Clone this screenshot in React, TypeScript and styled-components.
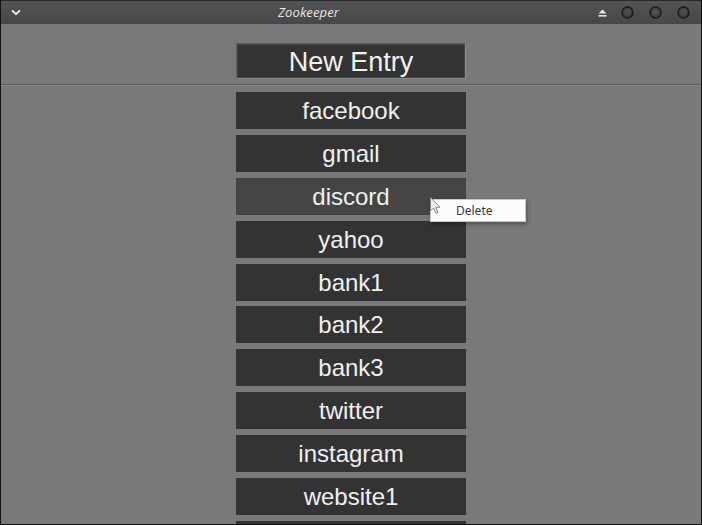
import React from "react";
import styled, { createGlobalStyle } from "styled-components";

const Global = createGlobalStyle`
  html, body { margin: 0; padding: 0; background: #000; }
  body { font-family: "Liberation Sans", Arial, sans-serif; }
`;

const Window = styled.div`
  position: relative;
  width: 702px;
  height: 525px;
  box-sizing: border-box;
  border: 1px solid #111;
  border-top-color: #2a2a2a;
  border-radius: 3px 3px 0 0;
  background: #797979;
  display: flex;
  flex-direction: column;
  overflow: hidden;
`;

const TitleBar = styled.div`
  height: 23px;
  flex: none;
  display: flex;
  align-items: center;
  background: linear-gradient(#525355, #46474a);
`;

const LeftZone = styled.div`
  width: 24px;
  display: flex;
  justify-content: center;
  padding-left: 6px;
  box-sizing: border-box;
`;

const Title = styled.div`
  flex: 1;
  text-align: center;
  font-family: "Open Sans", "Noto Sans", sans-serif;
  font-style: italic;
  font-size: 13px;
  color: #e8e8e8;
  letter-spacing: 0.1px;
  margin-top: -1px;
`;

const RightZone = styled.div`
  display: flex;
  align-items: center;
  gap: 16px;
  padding-right: 12px;
  padding-left: 6px;
`;

const Knob = styled.div`
  width: 13px;
  height: 13px;
  border-radius: 50%;
  box-sizing: border-box;
  border: 2px solid #232325;
  background: radial-gradient(circle at 50% 40%, #55565a, #3e3f42 75%);
  box-shadow: 0 0 0 0.5px #5c5d60;
  margin: 0 -0.5px;
`;

const Body = styled.div`
  flex: 1;
  display: flex;
  flex-direction: column;
`;

const Header = styled.div`
  height: 60px;
  flex: none;
  display: flex;
  justify-content: center;
  padding-top: 19px;
  box-sizing: border-box;
`;

const NewEntryFrame = styled.div`
  width: 230px;
  height: 36px;
  box-sizing: border-box;
  border: 1px solid;
  border-color: #5c5c5c #8a8a8a #8a8a8a #5c5c5c;
  background: #333333;
  box-shadow: inset 0 0 0 1px #444;
  display: flex;
  align-items: center;
  justify-content: center;
  color: #f2f2f2;
  font-size: 27px;
  line-height: 1;
  padding-top: 2px;
`;

const Separator = styled.div`
  height: 1px;
  flex: none;
  background: #5f5f5f;
  border-bottom: 1px solid #858585;
`;

const List = styled.div`
  display: flex;
  flex-direction: column;
  align-items: center;
  gap: 5.9px;
  padding-top: 6px;
`;

const Item = styled.div<{ $hover?: boolean }>`
  width: 230px;
  height: 37px;
  flex: none;
  background: ${(p) => (p.$hover ? "#454545" : "#333333")};
  color: #f0f0f0;
  font-size: 24px;
  display: flex;
  align-items: center;
  justify-content: center;
  line-height: 1;
  padding-top: 1px;
  box-sizing: border-box;
`;

const Menu = styled.div`
  position: absolute;
  left: 429px;
  top: 198px;
  width: 96px;
  height: 23px;
  box-sizing: border-box;
  background: #fcfcfc;
  border: 1px solid #c9c9c9;
  box-shadow: 1px 2px 4px rgba(0, 0, 0, 0.35);
  font-family: "Noto Sans", "Open Sans", sans-serif;
  font-size: 12px;
  color: #3a3a3a;
  padding-left: 25px;
  display: flex;
  align-items: center;
`;

const Cursor = styled.svg`
  position: absolute;
  left: 428px;
  top: 195px;
`;

const items = [
  "facebook",
  "gmail",
  "discord",
  "yahoo",
  "bank1",
  "bank2",
  "bank3",
  "twitter",
  "instagram",
  "website1",
  "website2",
];

export default function App() {
  return (
    <>
      <Global />
      <Window>
        <TitleBar>
          <LeftZone>
            <svg width="10" height="7" viewBox="0 0 10 7">
              <path d="M1 1.5 L5 5 L9 1.5" fill="none" stroke="#f0f0f0" strokeWidth="1.8" />
            </svg>
          </LeftZone>
          <Title>Zookeeper</Title>
          <RightZone>
            <svg width="9" height="8" viewBox="0 0 9 8" style={{ marginRight: -2 }}>
              <path d="M4.5 0.5 L8.5 4.5 L0.5 4.5 Z" fill="#e6e6e6" />
              <rect x="0.5" y="6" width="8" height="1.6" fill="#e6e6e6" />
            </svg>
            <Knob />
            <Knob />
            <Knob />
          </RightZone>
        </TitleBar>
        <Body>
          <Header>
            <NewEntryFrame>New Entry</NewEntryFrame>
          </Header>
          <Separator />
          <List>
            {items.map((name) => (
              <Item key={name} $hover={name === "discord"}>
                {name}
              </Item>
            ))}
          </List>
        </Body>
        <Menu>Delete</Menu>
        <Cursor width="14" height="20" viewBox="0 0 14 20">
          <path
            d="M1.5 1.5 L1.5 15 L4.5 12 L7 17.5 L9 16.6 L6.7 11.3 L11 11.3 Z"
            fill="#ededed"
            stroke="#8a8a8a"
            strokeWidth="1"
            strokeLinejoin="round"
          />
        </Cursor>
      </Window>
    </>
  );
}
